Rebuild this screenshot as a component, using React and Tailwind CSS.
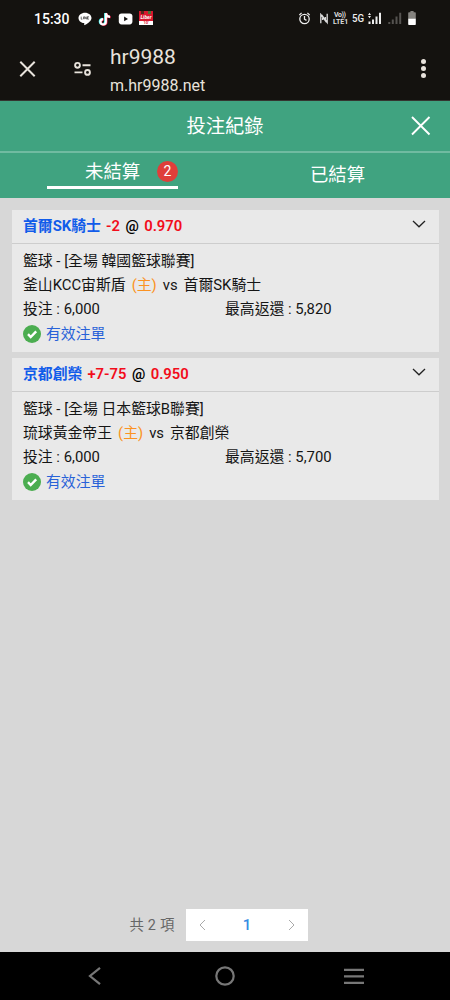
import React from 'react';

const bets = [
  {
    pick: '首爾SK騎士',
    line: '-2',
    odds: '0.970',
    league: '籃球 - [全場 韓國籃球聯賽]',
    home: '釜山KCC宙斯盾',
    away: '首爾SK騎士',
    stake: '6,000',
    payout: '5,820',
  },
  {
    pick: '京都創榮',
    line: '+7-75',
    odds: '0.950',
    league: '籃球 - [全場 日本籃球B聯賽]',
    home: '琉球黃金帝王',
    away: '京都創榮',
    stake: '6,000',
    payout: '5,700',
  },
];

function StatusBar() {
  return (
    <div className="flex h-[37px] items-center pl-[34px] pr-[34px] text-white">
      <span className="w-[44px] pt-[1px] text-[14px] font-medium leading-[37px]">15:30</span>
      <svg className="h-[14px] w-[14px] shrink-0" viewBox="0 0 14 14">
        <path d="M7 .7C3.400.700.500 3 .500 5.900c0 2.600 2.300 4.700 5.400 5.200.8.2.2 1.400.3 2 .1.400 5.500-2.600 6.700-5.100.4-.7.600-1.300.600-2.100C13.500 3 10.600.7 7 .7z" fill="#fff" />
        <path d="M3.200 4.600v2.600h1.200M5.500 4.600v2.600M6.700 7.200V4.600l1.600 2.600V4.600M10.800 4.600H9.500v2.600h1.300M9.500 5.900h1.100" fill="none" stroke="#333" strokeWidth=".7" />
      </svg>
      <svg className="ml-[6px] h-[14px] w-[14px] shrink-0" viewBox="0 0 14 14" fill="none" strokeWidth="2.200">
        <path d="M7.200.9v8.600a2.700 2.700 0 1 1-2.700-2.700M7.200 1c.3 2.300 1.900 3.600 4.200 3.700" stroke="#25f4ee" />
        <path d="M8.400 1.500v8.600a2.700 2.700 0 1 1-2.700-2.700M8.400 1.500c.3 2.300 1.900 3.600 4.200 3.700" stroke="#fe2c55" />
        <path d="M7.800 1.200v8.600a2.700 2.700 0 1 1-2.700-2.700M7.800 1.200c.3 2.300 1.900 3.600 4.200 3.700" stroke="#fff" />
      </svg>
      <svg className="ml-[6px] h-[12px] w-[15px] shrink-0" viewBox="0 0 15 12">
        <rect x=".8" y=".4" width="13.600" height="11" rx="2.800" fill="#fff" />
        <path d="M6.100 3.600v4.600L10 5.900z" fill="#14120f" />
      </svg>
      <div className="mb-[1px] ml-[6px] flex h-[14px] w-[14px] shrink-0 flex-col overflow-hidden bg-[#d8182f] text-center font-bold text-white">
        <div className="flex h-[3px] justify-between px-[2px]">
          <span className="w-[3px] bg-[#55251c]" />
          <span className="w-[3px] bg-[#4b7335]" />
        </div>
        <span className="h-[7px] text-[5px] italic leading-[6px]">Liber</span>
        <span className="h-[4px] bg-white text-[4px] leading-[4px] text-[#d8182f]">10'</span>
      </div>

      <svg className="ml-auto h-[14px] w-[13px] shrink-0" viewBox="0 0 13 14" fill="none" stroke="#eee" strokeWidth="1.300">
        <circle cx="5.500" cy="7" r="4.700" />
        <path d="M5.500 4.100v3.100l2 1.200M.3 3.100l2.300-2.200M10.700 3.100 8.400.9" />
      </svg>
      <svg className="ml-[8px] h-[12px] w-[9px] shrink-0" viewBox="0 0 9 12" fill="none" stroke="#ddd" strokeWidth="1.300">
        <path d="M.8 10.300V1.500l4.600 6.200V4M7.200.7v8.800L2.600 3.300V7" />
      </svg>
      <div className="ml-[4px] flex w-[16px] shrink-0 flex-col text-[7px] font-bold leading-[6.200px] text-[#ddd]">
        <span className="pl-[1px] tracking-[-0.4px]">Vo))</span>
        <span className="whitespace-nowrap">LTE1</span>
      </div>
      <span className="ml-[3px] w-[15px] shrink-0 origin-left scale-x-[0.88] text-[11px] font-medium leading-[14px] text-[#eee]">5G</span>
      <svg className="ml-[1px] h-[13px] w-[14px] shrink-0" viewBox="0 0 14 13" fill="#eee">
        <path d="M1.500.8 3 3H0zM1.500 6.200 3 4H0zM.5 9.500h2V12h-2zM4 7.500h2V12H4zM7.500 4.500h2V12h-2zM11 .8h2V12h-2z" />
      </svg>
      <svg className="ml-[6px] h-[13px] w-[14px] shrink-0" viewBox="0 0 14 13" fill="#555350">
        <path d="M.3 10h2v2h-2zM3.800 7.500h2V12h-2zM7.500 4.500h2V12h-2zM11.200.8h2V12h-2z" />
      </svg>
      <svg className="ml-[6px] h-[15px] w-[8px] shrink-0" viewBox="0 0 8 15">
        <path d="M2.400 0h3.200v1.200H7q.8 0 .8.8v6H.2V2q0-.8.8-.8h1.400z" fill="#85837f" />
        <path d="M.2 7.800h7.600v5.400q0 .8-.8.8H1q-.8 0-.8-.8z" fill="#fff" />
      </svg>
    </div>
  );
}

function BrowserBar() {
  return (
    <div className="flex h-[64px] border-b border-[#34342f] pl-[19px] pr-[24px] text-[#e8e3dc]">
      <svg className="mt-[23px] h-[18px] w-[18px]" viewBox="0 0 18 18" fill="none" stroke="currentColor" strokeWidth="2">
        <path d="m1.300 1.800 14.400 14.400M15.700 1.800 1.300 16.200" />
      </svg>
      <svg className="ml-[36px] mt-[23px] h-[18px] w-[19px]" viewBox="0 0 19 18" fill="none" stroke="currentColor" strokeWidth="1.900">
        <circle cx="4.500" cy="5.300" r="2.400" />
        <path d="M9.500 5.300h8M1.500 12.400h8" />
        <circle cx="14.500" cy="12.400" r="2.400" />
      </svg>
      <div className="ml-[18px] pt-[7px]">
        <div className="text-[21px] leading-[26px]">hr9988</div>
        <div className="pt-[4px] text-[16px] leading-[23px]">m.hr9988.net</div>
      </div>
      <div className="ml-auto mt-[22px] flex flex-col gap-[2px]">
        <i className="h-[5px] w-[5px] rounded-full bg-current" />
        <i className="h-[5px] w-[5px] rounded-full bg-current" />
        <i className="h-[5px] w-[5px] rounded-full bg-current" />
      </div>
    </div>
  );
}

function BetCard({ bet }) {
  return (
    <article className="h-[142.600px] bg-[#e9e9e9] text-[14.850px] text-[#151515]">
      <header className="flex h-[34px] border-b border-[#cdcdcd] pl-[11.500px] pr-[13px] font-bold leading-[33px]">
        <span className="text-[#115cea]">{bet.pick}</span>
        <span className="ml-[5px] font-semibold text-[#f20d1b]">{bet.line}</span>
        <span className="ml-[5.500px] font-semibold text-black">@</span>
        <span className="ml-[5.500px] font-semibold tracking-[-0.05px] text-[#f20d1b]">{bet.odds}</span>
        <svg className="ml-auto mt-[9px] h-[9px] w-[14px]" viewBox="0 0 14 9" fill="none" stroke="#222" strokeWidth="1.300">
          <path d="m1 2 6 5.800L13 2" />
        </svg>
      </header>
      <div className="pl-[11.500px] pt-[5px] leading-[24px]">
        <p>{bet.league}</p>
        <p className="flex">
          <span>{bet.home}</span>
          <span className="ml-[6px] text-[#fb9222]">(主)</span>
          <span className="ml-[6px]">vs</span>
          <span className="ml-[6px]">{bet.away}</span>
        </p>
        <p className="flex">
          <span className="w-[202px]">投注 : {bet.stake}</span>
          <span>最高返還 : {bet.payout}</span>
        </p>
        <p className="flex items-center pt-[1px] text-[#2862d8]">
          <svg className="mr-[5px] h-[18px] w-[18px]" viewBox="0 0 18 18">
            <circle cx="9" cy="9" r="9" fill="#4bad50" />
            <path d="m5 9.200 2.700 2.800L13.200 6.400" fill="none" stroke="#fff" strokeWidth="2.400" />
          </svg>
          有效注單
        </p>
      </div>
    </article>
  );
}

export default function App() {
  return (
    <div className="flex h-[1000px] w-[450px] flex-col overflow-hidden bg-[#d7d7d7] font-[Roboto,'Noto_Sans_CJK_TC',sans-serif]">
      <div className="bg-[#14120f]">
        <StatusBar />
        <BrowserBar />
      </div>

      <div className="bg-[#40a380] text-white">
        <div className="grid h-[52px] grid-cols-[60px_1fr_60px] items-center border-b-2 border-[#70bba1]">
          <h1 className="col-start-2 pt-[1px] text-center text-[19.300px] leading-[49px]">投注紀錄</h1>
          <svg className="ml-[21px] h-[20px] w-[20px]" viewBox="0 0 20 20" fill="none" stroke="#fff" strokeWidth="1.900">
            <path d="m1 1 17.500 17.500M18.500 1 1 18.500" />
          </svg>
        </div>
        <div className="flex h-[45px] text-[18.400px]">
          <div className="w-[225px] pl-[47px]">
            <div className="flex h-[36px] w-[131px] items-center border-b-[3px] border-white pl-[38px]">
              <span className="pt-[5px] leading-[28px]">未結算</span>
              <span className="ml-auto mt-[3px] flex h-[21px] w-[21px] items-center justify-center rounded-full bg-[#df3e3a] text-[14px]">2</span>
            </div>
          </div>
          <div className="w-[225px] pt-[1px] text-center leading-[42px]">已結算</div>
        </div>
      </div>

      <main className="flex flex-1 flex-col gap-[5.800px] px-[11.500px] pt-[11.500px]">
        {bets.map((bet) => (
          <BetCard key={bet.pick} bet={bet} />
        ))}
      </main>

      <footer className="flex h-[43px] pl-[129.500px] text-[#666]">
        <span className="w-[56.500px] whitespace-nowrap text-[14.400px] leading-[34px] tracking-[0.2px]">共 2 項</span>
        <div className="flex h-[32px] w-[122px] items-center justify-between bg-white pl-[13px] pr-[13px]">
          <svg className="h-[12px] w-[7px]" viewBox="0 0 7 12" fill="none" stroke="#aaa">
            <path d="M6 1 1 6l5 5" />
          </svg>
          <span className="text-[15px] font-medium text-[#368ce3]">1</span>
          <svg className="h-[12px] w-[7px]" viewBox="0 0 7 12" fill="none" stroke="#aaa">
            <path d="m1 1 5 5-5 5" />
          </svg>
        </div>
      </footer>

      <nav className="flex h-[48px] items-center bg-black pl-[87px] pr-[86px] text-[#777]">
        <svg className="h-[20px] w-[16px]" viewBox="0 0 16 20" fill="none" stroke="currentColor" strokeWidth="2.200">
          <path d="M13 1.800 3 10l10 8.200" />
        </svg>
        <svg className="ml-[112px] h-[20px] w-[20px]" viewBox="0 0 20 20" fill="none" stroke="currentColor" strokeWidth="2.200">
          <circle cx="10" cy="10" r="8.700" />
        </svg>
        <svg className="ml-auto h-[16px] w-[20px]" viewBox="0 0 20 16" fill="none" stroke="currentColor" strokeWidth="2.200">
          <path d="M0 1.800h20M0 8.300h20M0 14.800h20" />
        </svg>
      </nav>
    </div>
  );
}
